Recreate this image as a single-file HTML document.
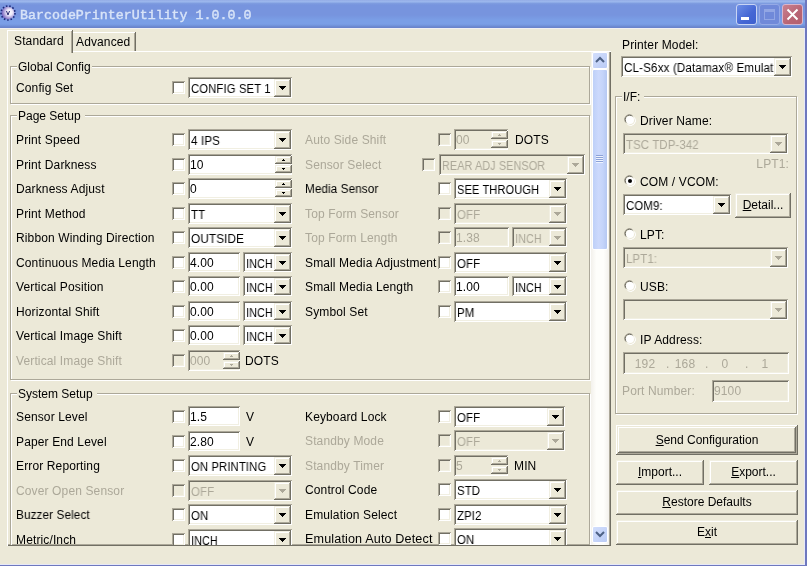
<!DOCTYPE html>
<html><head><meta charset="utf-8"><style>
html,body{margin:0;padding:0;}
body{width:807px;height:566px;overflow:hidden;background:#ECE9D8;position:relative;font-family:"Liberation Sans",sans-serif;font-size:12px;}
div,svg{position:absolute;box-sizing:border-box;}
.t{will-change:transform;white-space:nowrap;line-height:13px;color:#000;letter-spacing:0.13px;}
.d{color:#ACA899;}
.sk{box-shadow:inset 1px 1px #ACA899, inset -1px -1px #FFFFFF, inset 2px 2px #716F64, inset -2px -2px #F1EFE2;}
.rb,.sb{background:#ECE9D8;box-shadow:inset -1px -1px #716F64, inset 1px 1px #F1EFE2, inset -2px -2px #ACA899, inset 2px 2px #FFFFFF;}
.ck{width:13px;height:13px;box-shadow:inset 1px 1px #ACA899, inset -1px -1px #FFFFFF, inset 2px 2px #716F64, inset -2px -2px #F1EFE2;}
.gb{border:1px solid #ACA899;box-shadow:inset 1px 1px #fff, 1px 1px #fff;}
.gt{will-change:transform;background:#ECE9D8;height:13px;line-height:13px;white-space:nowrap;padding-left:1px;}
.btn{will-change:transform;background:#ECE9D8;text-align:center;white-space:nowrap;box-shadow:inset -1px -1px #716F64, inset 1px 1px #F1EFE2, inset -2px -2px #ACA899, inset 2px 2px #FFFFFF;}
.btn.def{box-shadow:inset -1px -1px #716F64, inset 1px 1px #FFFFFF, inset -2px -2px #ACA899, inset 2px 2px #ECE9D8, inset -3px -3px #716F64, inset 3px 3px #FFFFFF, inset -4px -4px #ACA899, inset 4px 4px #ECE9D8;}
#clip{left:8px;top:52px;width:583px;height:493px;overflow:hidden;}
#clip > *{}
#title{left:0;top:0;width:807px;height:28px;background:linear-gradient(to bottom,#94ACE6 0px,#9DB9EE 2px,#809EE0 3px,#7794DE 5px,#7794DE 15px,#7A9EE6 20px,#7A9EE6 24px,#7090D8 26px,#6A84CC 27px,#6A84CC 28px);}
</style></head><body>
<div id="title"></div>
<div class="t" style="left:20px;top:9px;font-family:'Liberation Mono',monospace;font-weight:normal;-webkit-text-stroke:0.4px #D8E4F8;font-size:13.3px;line-height:14px;color:#D8E4F8;letter-spacing:0;">BarcodePrinterUtility 1.0.0.0</div>

<!-- title icon -->
<svg style="left:0px;top:5px" width="17" height="17">
<defs><radialGradient id="ig" cx="0.62" cy="0.45" r="0.65"><stop offset="0" stop-color="#ffffff"/><stop offset="0.35" stop-color="#EDE8FA"/><stop offset="1" stop-color="#6450B4"/></radialGradient></defs>
<circle cx="8" cy="8" r="6.5" fill="url(#ig)"/>
<circle cx="8" cy="8" r="7" fill="none" stroke="#1E2A7A" stroke-width="1.6" stroke-dasharray="1.6 1.8"/>
<path d="M6.5,6 L8,10 L9.5,6" stroke="#2A2A70" stroke-width="1" fill="none"/>
</svg>
<!-- title buttons -->
<div style="left:736px;top:4px;width:21px;height:21px;border-radius:3px;border:1px solid #C8D4F4;background:linear-gradient(135deg,#6E8FE6,#4466D4 60%,#3D60CF);"></div>
<div style="left:741px;top:17px;width:8px;height:3px;background:#fff;"></div>
<div style="left:759px;top:4px;width:21px;height:21px;border-radius:3px;border:1px solid #95A9E6;background:#7089D9;"></div>
<div style="left:764px;top:9px;width:11px;height:11px;border:1px solid #92A6E4;border-top-width:3px;"></div>
<div style="left:782px;top:4px;width:21px;height:21px;border-radius:3px;border:1px solid #D9B5CB;background:linear-gradient(135deg,#C98190,#B86474 60%,#B35F6F);"></div>
<svg style="left:786px;top:8px" width="13" height="13"><path d="M1.5,1.5 L11.5,11.5 M11.5,1.5 L1.5,11.5" stroke="#fff" stroke-width="2"/></svg>
<div style="left:0;top:28px;width:804px;height:1px;background:#F2F0F0"></div>
<!-- tabs -->
<div style="left:7px;top:51px;width:604px;height:495px;box-shadow:inset 1px 1px #fff, inset -1px -1px #716F64, inset -2px -2px #ACA899;"></div>
<div style="left:72px;top:32px;width:63px;height:19px;background:#ECE9D8;border-left:1px solid #fff;border-top:1px solid #fff;box-shadow:inset -1px 0 #ACA899, 1px 0 #716F64;"></div>
<div class="t" style="left:76px;top:36px;">Advanced</div>
<div style="left:7px;top:30px;width:65px;height:23px;background:#ECE9D8;border-left:1px solid #fff;border-top:1px solid #fff;box-shadow:inset -1px 0 #ACA899, 1px 0 #716F64;"></div>
<div class="t" style="left:14px;top:35px;">Standard</div>
<div id="clip"><div style="left:-8px;top:-52px;width:807px;height:566px">
<div class="gb" style="left:10px;top:66px;width:580px;height:38px"></div>
<div class="gt" style="left:17px;top:61px;width:75px"><span>Global Config</span></div>
<div class="t" style="left:16px;top:82px;">Config Set</div>
<div class="ck" style="left:172px;top:81px;background:#fff"></div>
<div class="sk" style="left:188px;top:77px;width:104px;height:21px;background:#fff"></div>
<div class="rb" style="left:274px;top:79px;width:17px;height:18px"></div>
<svg style="left:279px;top:86px" width="7" height="4" shape-rendering="crispEdges"><path d="M0,0h7v1h-1v1h-1v1h-1v1h-1v-1h-1v-1h-1v-1h-1z" fill="#000"/></svg>
<div class="t" style="left:191px;top:83px;width:83px;overflow:hidden"><div class="t" style="position:relative;color:inherit;transform:scaleX(0.94);transform-origin:0 0">CONFIG SET 1</div></div>
<div class="gb" style="left:10px;top:115px;width:580px;height:265px"></div>
<div class="gt" style="left:17px;top:110px;width:68px"><span>Page Setup</span></div>
<div class="t" style="left:16px;top:134px;">Print Speed</div>
<div class="ck" style="left:172px;top:133px;background:#fff"></div>
<div class="sk" style="left:188px;top:129px;width:104px;height:21px;background:#fff"></div>
<div class="rb" style="left:274px;top:131px;width:17px;height:18px"></div>
<svg style="left:279px;top:138px" width="7" height="4" shape-rendering="crispEdges"><path d="M0,0h7v1h-1v1h-1v1h-1v1h-1v-1h-1v-1h-1v-1h-1z" fill="#000"/></svg>
<div class="t" style="left:191px;top:135px;width:83px;overflow:hidden"><div class="t" style="position:relative;color:inherit;transform:scaleX(0.97);transform-origin:0 0">4 IPS</div></div>
<div class="t" style="left:16px;top:159px;">Print Darkness</div>
<div class="ck" style="left:172px;top:158px;background:#fff"></div>
<div class="sk" style="left:188px;top:154px;width:104px;height:21px;background:#fff"></div>
<div class="sb" style="left:275px;top:156px;width:17px;height:8px"></div>
<div class="sb" style="left:275px;top:165px;width:17px;height:8px"></div>
<svg style="left:282px;top:159px" width="3" height="2" shape-rendering="crispEdges"><path d="M1,0h1v1h1v1h-3v-1h1z" fill="#000"/></svg>
<svg style="left:282px;top:168px" width="3" height="2" shape-rendering="crispEdges"><path d="M0,0h3v1h-1v1h-1v-1h-1z" fill="#000"/></svg>
<div class="t" style="left:190px;top:159px;">10</div>
<div class="t" style="left:16px;top:183px;">Darkness Adjust</div>
<div class="ck" style="left:172px;top:182px;background:#fff"></div>
<div class="sk" style="left:188px;top:178px;width:104px;height:21px;background:#fff"></div>
<div class="sb" style="left:275px;top:180px;width:17px;height:8px"></div>
<div class="sb" style="left:275px;top:189px;width:17px;height:8px"></div>
<svg style="left:282px;top:183px" width="3" height="2" shape-rendering="crispEdges"><path d="M1,0h1v1h1v1h-3v-1h1z" fill="#000"/></svg>
<svg style="left:282px;top:192px" width="3" height="2" shape-rendering="crispEdges"><path d="M0,0h3v1h-1v1h-1v-1h-1z" fill="#000"/></svg>
<div class="t" style="left:190px;top:183px;">0</div>
<div class="t" style="left:16px;top:208px;">Print Method</div>
<div class="ck" style="left:172px;top:207px;background:#fff"></div>
<div class="sk" style="left:188px;top:203px;width:104px;height:21px;background:#fff"></div>
<div class="rb" style="left:274px;top:205px;width:17px;height:18px"></div>
<svg style="left:279px;top:212px" width="7" height="4" shape-rendering="crispEdges"><path d="M0,0h7v1h-1v1h-1v1h-1v1h-1v-1h-1v-1h-1v-1h-1z" fill="#000"/></svg>
<div class="t" style="left:191px;top:209px;width:83px;overflow:hidden"><div class="t" style="position:relative;color:inherit;transform:scaleX(0.95);transform-origin:0 0">TT</div></div>
<div class="t" style="left:16px;top:232px;">Ribbon Winding Direction</div>
<div class="ck" style="left:172px;top:231px;background:#fff"></div>
<div class="sk" style="left:188px;top:227px;width:104px;height:21px;background:#fff"></div>
<div class="rb" style="left:274px;top:229px;width:17px;height:18px"></div>
<svg style="left:279px;top:236px" width="7" height="4" shape-rendering="crispEdges"><path d="M0,0h7v1h-1v1h-1v1h-1v1h-1v-1h-1v-1h-1v-1h-1z" fill="#000"/></svg>
<div class="t" style="left:191px;top:233px;width:83px;overflow:hidden"><div class="t" style="position:relative;color:inherit;transform:scaleX(0.98);transform-origin:0 0">OUTSIDE</div></div>
<div class="t" style="left:16px;top:257px;">Continuous Media Length</div>
<div class="ck" style="left:172px;top:256px;background:#fff"></div>
<div class="sk" style="left:188px;top:252px;width:52px;height:20px;background:#fff"></div>
<div class="t" style="left:190px;top:257px;">4.00</div>
<div class="sk" style="left:243px;top:252px;width:49px;height:20px;background:#fff"></div>
<div class="rb" style="left:274px;top:254px;width:17px;height:17px"></div>
<svg style="left:279px;top:261px" width="7" height="4" shape-rendering="crispEdges"><path d="M0,0h7v1h-1v1h-1v1h-1v1h-1v-1h-1v-1h-1v-1h-1z" fill="#000"/></svg>
<div class="t" style="left:246px;top:258px;width:28px;overflow:hidden"><div class="t" style="position:relative;color:inherit;transform:scaleX(0.9);transform-origin:0 0">INCH</div></div>
<div class="t" style="left:16px;top:281px;">Vertical Position</div>
<div class="ck" style="left:172px;top:280px;background:#fff"></div>
<div class="sk" style="left:188px;top:276px;width:52px;height:20px;background:#fff"></div>
<div class="t" style="left:190px;top:281px;">0.00</div>
<div class="sk" style="left:243px;top:276px;width:49px;height:20px;background:#fff"></div>
<div class="rb" style="left:274px;top:278px;width:17px;height:17px"></div>
<svg style="left:279px;top:285px" width="7" height="4" shape-rendering="crispEdges"><path d="M0,0h7v1h-1v1h-1v1h-1v1h-1v-1h-1v-1h-1v-1h-1z" fill="#000"/></svg>
<div class="t" style="left:246px;top:282px;width:28px;overflow:hidden"><div class="t" style="position:relative;color:inherit;transform:scaleX(0.9);transform-origin:0 0">INCH</div></div>
<div class="t" style="left:16px;top:306px;">Horizontal Shift</div>
<div class="ck" style="left:172px;top:305px;background:#fff"></div>
<div class="sk" style="left:188px;top:301px;width:52px;height:20px;background:#fff"></div>
<div class="t" style="left:190px;top:306px;">0.00</div>
<div class="sk" style="left:243px;top:301px;width:49px;height:20px;background:#fff"></div>
<div class="rb" style="left:274px;top:303px;width:17px;height:17px"></div>
<svg style="left:279px;top:310px" width="7" height="4" shape-rendering="crispEdges"><path d="M0,0h7v1h-1v1h-1v1h-1v1h-1v-1h-1v-1h-1v-1h-1z" fill="#000"/></svg>
<div class="t" style="left:246px;top:307px;width:28px;overflow:hidden"><div class="t" style="position:relative;color:inherit;transform:scaleX(0.9);transform-origin:0 0">INCH</div></div>
<div class="t" style="left:16px;top:330px;">Vertical Image Shift</div>
<div class="ck" style="left:172px;top:329px;background:#fff"></div>
<div class="sk" style="left:188px;top:325px;width:52px;height:20px;background:#fff"></div>
<div class="t" style="left:190px;top:330px;">0.00</div>
<div class="sk" style="left:243px;top:325px;width:49px;height:20px;background:#fff"></div>
<div class="rb" style="left:274px;top:327px;width:17px;height:17px"></div>
<svg style="left:279px;top:334px" width="7" height="4" shape-rendering="crispEdges"><path d="M0,0h7v1h-1v1h-1v1h-1v1h-1v-1h-1v-1h-1v-1h-1z" fill="#000"/></svg>
<div class="t" style="left:246px;top:331px;width:28px;overflow:hidden"><div class="t" style="position:relative;color:inherit;transform:scaleX(0.9);transform-origin:0 0">INCH</div></div>
<div class="t d" style="left:16px;top:355px;">Vertical Image Shift</div>
<div class="ck" style="left:172px;top:354px;background:#ECE9D8"></div>
<div class="sk" style="left:188px;top:350px;width:52px;height:21px;background:#ECE9D8"></div>
<div class="sb" style="left:223px;top:352px;width:17px;height:8px"></div>
<div class="sb" style="left:223px;top:361px;width:17px;height:8px"></div>
<svg style="left:230px;top:355px" width="3" height="2" shape-rendering="crispEdges"><path d="M1,0h1v1h1v1h-3v-1h1z" fill="#ACA899"/></svg>
<svg style="left:230px;top:364px" width="3" height="2" shape-rendering="crispEdges"><path d="M0,0h3v1h-1v1h-1v-1h-1z" fill="#ACA899"/></svg>
<div class="t d" style="left:190px;top:355px;">000</div>
<div class="t" style="left:245px;top:355px;">DOTS</div>
<div class="t d" style="left:305px;top:134px;">Auto Side Shift</div>
<div class="ck" style="left:438px;top:133px;background:#ECE9D8"></div>
<div class="sk" style="left:454px;top:129px;width:54px;height:21px;background:#ECE9D8"></div>
<div class="sb" style="left:491px;top:131px;width:17px;height:8px"></div>
<div class="sb" style="left:491px;top:140px;width:17px;height:8px"></div>
<svg style="left:498px;top:134px" width="3" height="2" shape-rendering="crispEdges"><path d="M1,0h1v1h1v1h-3v-1h1z" fill="#ACA899"/></svg>
<svg style="left:498px;top:143px" width="3" height="2" shape-rendering="crispEdges"><path d="M0,0h3v1h-1v1h-1v-1h-1z" fill="#ACA899"/></svg>
<div class="t d" style="left:456px;top:134px;">00</div>
<div class="t" style="left:515px;top:134px;">DOTS</div>
<div class="t d" style="left:305px;top:159px;">Sensor Select</div>
<div class="ck" style="left:422px;top:158px;background:#ECE9D8"></div>
<div class="sk" style="left:439px;top:154px;width:146px;height:21px;background:#ECE9D8"></div>
<div class="rb" style="left:567px;top:156px;width:17px;height:18px"></div>
<svg style="left:572px;top:163px" width="7" height="4" shape-rendering="crispEdges"><path d="M0,0h7v1h-1v1h-1v1h-1v1h-1v-1h-1v-1h-1v-1h-1z" fill="#ACA899"/></svg>
<div class="t d" style="left:442px;top:160px;width:125px;overflow:hidden"><div class="t" style="position:relative;color:inherit;transform:scaleX(0.9);transform-origin:0 0">REAR ADJ SENSOR</div></div>
<div class="t" style="left:305px;top:183px;transform:scaleX(0.97);transform-origin:0 0;">Media Sensor</div>
<div class="ck" style="left:438px;top:182px;background:#fff"></div>
<div class="sk" style="left:454px;top:178px;width:113px;height:21px;background:#fff"></div>
<div class="rb" style="left:549px;top:180px;width:17px;height:18px"></div>
<svg style="left:554px;top:187px" width="7" height="4" shape-rendering="crispEdges"><path d="M0,0h7v1h-1v1h-1v1h-1v1h-1v-1h-1v-1h-1v-1h-1z" fill="#000"/></svg>
<div class="t" style="left:457px;top:184px;width:92px;overflow:hidden"><div class="t" style="position:relative;color:inherit;transform:scaleX(0.92);transform-origin:0 0">SEE THROUGH</div></div>
<div class="t d" style="left:305px;top:208px;">Top Form Sensor</div>
<div class="ck" style="left:438px;top:207px;background:#ECE9D8"></div>
<div class="sk" style="left:454px;top:203px;width:113px;height:21px;background:#ECE9D8"></div>
<div class="rb" style="left:549px;top:205px;width:17px;height:18px"></div>
<svg style="left:554px;top:212px" width="7" height="4" shape-rendering="crispEdges"><path d="M0,0h7v1h-1v1h-1v1h-1v1h-1v-1h-1v-1h-1v-1h-1z" fill="#ACA899"/></svg>
<div class="t d" style="left:457px;top:209px;width:92px;overflow:hidden"><div class="t" style="position:relative;color:inherit;transform:scaleX(0.95);transform-origin:0 0">OFF</div></div>
<div class="t d" style="left:305px;top:232px;">Top Form Length</div>
<div class="ck" style="left:438px;top:231px;background:#ECE9D8"></div>
<div class="sk" style="left:454px;top:227px;width:55px;height:20px;background:#ECE9D8"></div>
<div class="t d" style="left:456px;top:232px;">1.38</div>
<div class="sk" style="left:512px;top:227px;width:55px;height:20px;background:#ECE9D8"></div>
<div class="rb" style="left:549px;top:229px;width:17px;height:17px"></div>
<svg style="left:554px;top:236px" width="7" height="4" shape-rendering="crispEdges"><path d="M0,0h7v1h-1v1h-1v1h-1v1h-1v-1h-1v-1h-1v-1h-1z" fill="#ACA899"/></svg>
<div class="t d" style="left:515px;top:233px;width:34px;overflow:hidden"><div class="t" style="position:relative;color:inherit;transform:scaleX(0.9);transform-origin:0 0">INCH</div></div>
<div class="t" style="left:305px;top:257px;">Small Media Adjustment</div>
<div class="ck" style="left:438px;top:256px;background:#fff"></div>
<div class="sk" style="left:454px;top:252px;width:113px;height:21px;background:#fff"></div>
<div class="rb" style="left:549px;top:254px;width:17px;height:18px"></div>
<svg style="left:554px;top:261px" width="7" height="4" shape-rendering="crispEdges"><path d="M0,0h7v1h-1v1h-1v1h-1v1h-1v-1h-1v-1h-1v-1h-1z" fill="#000"/></svg>
<div class="t" style="left:457px;top:258px;width:92px;overflow:hidden"><div class="t" style="position:relative;color:inherit;transform:scaleX(0.95);transform-origin:0 0">OFF</div></div>
<div class="t" style="left:305px;top:281px;">Small Media Length</div>
<div class="ck" style="left:438px;top:280px;background:#fff"></div>
<div class="sk" style="left:454px;top:276px;width:55px;height:20px;background:#fff"></div>
<div class="t" style="left:456px;top:281px;">1.00</div>
<div class="sk" style="left:512px;top:276px;width:55px;height:20px;background:#fff"></div>
<div class="rb" style="left:549px;top:278px;width:17px;height:17px"></div>
<svg style="left:554px;top:285px" width="7" height="4" shape-rendering="crispEdges"><path d="M0,0h7v1h-1v1h-1v1h-1v1h-1v-1h-1v-1h-1v-1h-1z" fill="#000"/></svg>
<div class="t" style="left:515px;top:282px;width:34px;overflow:hidden"><div class="t" style="position:relative;color:inherit;transform:scaleX(0.9);transform-origin:0 0">INCH</div></div>
<div class="t" style="left:305px;top:306px;">Symbol Set</div>
<div class="ck" style="left:438px;top:305px;background:#fff"></div>
<div class="sk" style="left:454px;top:301px;width:113px;height:21px;background:#fff"></div>
<div class="rb" style="left:549px;top:303px;width:17px;height:18px"></div>
<svg style="left:554px;top:310px" width="7" height="4" shape-rendering="crispEdges"><path d="M0,0h7v1h-1v1h-1v1h-1v1h-1v-1h-1v-1h-1v-1h-1z" fill="#000"/></svg>
<div class="t" style="left:457px;top:307px;width:92px;overflow:hidden"><div class="t" style="position:relative;color:inherit;transform:scaleX(0.95);transform-origin:0 0">PM</div></div>
<div class="gb" style="left:10px;top:393px;width:580px;height:200px"></div>
<div class="gt" style="left:17px;top:388px;width:80px"><span>System Setup</span></div>
<div class="t" style="left:16px;top:411px;">Sensor Level</div>
<div class="ck" style="left:172px;top:410px;background:#fff"></div>
<div class="sk" style="left:188px;top:406px;width:52px;height:20px;background:#fff"></div>
<div class="t" style="left:190px;top:411px;">1.5</div>
<div class="t" style="left:246px;top:411px;">V</div>
<div class="t" style="left:16px;top:436px;">Paper End Level</div>
<div class="ck" style="left:172px;top:435px;background:#fff"></div>
<div class="sk" style="left:188px;top:431px;width:52px;height:20px;background:#fff"></div>
<div class="t" style="left:190px;top:436px;">2.80</div>
<div class="t" style="left:246px;top:436px;">V</div>
<div class="t" style="left:16px;top:460px;">Error Reporting</div>
<div class="ck" style="left:172px;top:459px;background:#fff"></div>
<div class="sk" style="left:188px;top:455px;width:104px;height:21px;background:#fff"></div>
<div class="rb" style="left:274px;top:457px;width:17px;height:18px"></div>
<svg style="left:279px;top:464px" width="7" height="4" shape-rendering="crispEdges"><path d="M0,0h7v1h-1v1h-1v1h-1v1h-1v-1h-1v-1h-1v-1h-1z" fill="#000"/></svg>
<div class="t" style="left:191px;top:461px;width:83px;overflow:hidden"><div class="t" style="position:relative;color:inherit;transform:scaleX(0.94);transform-origin:0 0">ON PRINTING</div></div>
<div class="t d" style="left:16px;top:485px;">Cover Open Sensor</div>
<div class="ck" style="left:172px;top:484px;background:#ECE9D8"></div>
<div class="sk" style="left:188px;top:480px;width:104px;height:21px;background:#ECE9D8"></div>
<div class="rb" style="left:274px;top:482px;width:17px;height:18px"></div>
<svg style="left:279px;top:489px" width="7" height="4" shape-rendering="crispEdges"><path d="M0,0h7v1h-1v1h-1v1h-1v1h-1v-1h-1v-1h-1v-1h-1z" fill="#ACA899"/></svg>
<div class="t d" style="left:191px;top:486px;width:83px;overflow:hidden"><div class="t" style="position:relative;color:inherit;transform:scaleX(0.95);transform-origin:0 0">OFF</div></div>
<div class="t" style="left:16px;top:509px;transform:scaleX(0.975);transform-origin:0 0;">Buzzer Select</div>
<div class="ck" style="left:172px;top:508px;background:#fff"></div>
<div class="sk" style="left:188px;top:504px;width:104px;height:21px;background:#fff"></div>
<div class="rb" style="left:274px;top:506px;width:17px;height:18px"></div>
<svg style="left:279px;top:513px" width="7" height="4" shape-rendering="crispEdges"><path d="M0,0h7v1h-1v1h-1v1h-1v1h-1v-1h-1v-1h-1v-1h-1z" fill="#000"/></svg>
<div class="t" style="left:191px;top:510px;width:83px;overflow:hidden"><div class="t" style="position:relative;color:inherit;transform:scaleX(0.95);transform-origin:0 0">ON</div></div>
<div class="t" style="left:16px;top:534px;">Metric/Inch</div>
<div class="ck" style="left:172px;top:533px;background:#fff"></div>
<div class="sk" style="left:188px;top:529px;width:104px;height:21px;background:#fff"></div>
<div class="rb" style="left:274px;top:531px;width:17px;height:18px"></div>
<svg style="left:279px;top:538px" width="7" height="4" shape-rendering="crispEdges"><path d="M0,0h7v1h-1v1h-1v1h-1v1h-1v-1h-1v-1h-1v-1h-1z" fill="#000"/></svg>
<div class="t" style="left:191px;top:535px;width:83px;overflow:hidden"><div class="t" style="position:relative;color:inherit;transform:scaleX(0.9);transform-origin:0 0">INCH</div></div>
<div class="t" style="left:305px;top:411px;">Keyboard Lock</div>
<div class="ck" style="left:438px;top:410px;background:#fff"></div>
<div class="sk" style="left:454px;top:406px;width:111px;height:21px;background:#fff"></div>
<div class="rb" style="left:547px;top:408px;width:17px;height:18px"></div>
<svg style="left:552px;top:415px" width="7" height="4" shape-rendering="crispEdges"><path d="M0,0h7v1h-1v1h-1v1h-1v1h-1v-1h-1v-1h-1v-1h-1z" fill="#000"/></svg>
<div class="t" style="left:457px;top:412px;width:90px;overflow:hidden"><div class="t" style="position:relative;color:inherit;transform:scaleX(0.95);transform-origin:0 0">OFF</div></div>
<div class="t d" style="left:305px;top:435px;">Standby Mode</div>
<div class="ck" style="left:438px;top:434px;background:#ECE9D8"></div>
<div class="sk" style="left:454px;top:430px;width:111px;height:21px;background:#ECE9D8"></div>
<div class="rb" style="left:547px;top:432px;width:17px;height:18px"></div>
<svg style="left:552px;top:439px" width="7" height="4" shape-rendering="crispEdges"><path d="M0,0h7v1h-1v1h-1v1h-1v1h-1v-1h-1v-1h-1v-1h-1z" fill="#ACA899"/></svg>
<div class="t d" style="left:457px;top:436px;width:90px;overflow:hidden"><div class="t" style="position:relative;color:inherit;transform:scaleX(0.95);transform-origin:0 0">OFF</div></div>
<div class="t d" style="left:305px;top:460px;">Standby Timer</div>
<div class="ck" style="left:438px;top:459px;background:#ECE9D8"></div>
<div class="sk" style="left:454px;top:455px;width:54px;height:21px;background:#ECE9D8"></div>
<div class="sb" style="left:491px;top:457px;width:17px;height:8px"></div>
<div class="sb" style="left:491px;top:466px;width:17px;height:8px"></div>
<svg style="left:498px;top:460px" width="3" height="2" shape-rendering="crispEdges"><path d="M1,0h1v1h1v1h-3v-1h1z" fill="#ACA899"/></svg>
<svg style="left:498px;top:469px" width="3" height="2" shape-rendering="crispEdges"><path d="M0,0h3v1h-1v1h-1v-1h-1z" fill="#ACA899"/></svg>
<div class="t d" style="left:456px;top:460px;">5</div>
<div class="t" style="left:514px;top:460px;">MIN</div>
<div class="t" style="left:305px;top:484px;">Control Code</div>
<div class="ck" style="left:438px;top:483px;background:#fff"></div>
<div class="sk" style="left:454px;top:479px;width:113px;height:21px;background:#fff"></div>
<div class="rb" style="left:549px;top:481px;width:17px;height:18px"></div>
<svg style="left:554px;top:488px" width="7" height="4" shape-rendering="crispEdges"><path d="M0,0h7v1h-1v1h-1v1h-1v1h-1v-1h-1v-1h-1v-1h-1z" fill="#000"/></svg>
<div class="t" style="left:457px;top:485px;width:92px;overflow:hidden"><div class="t" style="position:relative;color:inherit;transform:scaleX(0.95);transform-origin:0 0">STD</div></div>
<div class="t" style="left:305px;top:509px;">Emulation Select</div>
<div class="ck" style="left:438px;top:508px;background:#fff"></div>
<div class="sk" style="left:454px;top:504px;width:113px;height:21px;background:#fff"></div>
<div class="rb" style="left:549px;top:506px;width:17px;height:18px"></div>
<svg style="left:554px;top:513px" width="7" height="4" shape-rendering="crispEdges"><path d="M0,0h7v1h-1v1h-1v1h-1v1h-1v-1h-1v-1h-1v-1h-1z" fill="#000"/></svg>
<div class="t" style="left:457px;top:510px;width:92px;overflow:hidden"><div class="t" style="position:relative;color:inherit;transform:scaleX(0.95);transform-origin:0 0">ZPI2</div></div>
<div class="t" style="left:305px;top:533px;transform:scaleX(1.05);transform-origin:0 0;">Emulation Auto Detect</div>
<div class="ck" style="left:438px;top:532px;background:#fff"></div>
<div class="sk" style="left:454px;top:528px;width:113px;height:21px;background:#fff"></div>
<div class="rb" style="left:549px;top:530px;width:17px;height:18px"></div>
<svg style="left:554px;top:537px" width="7" height="4" shape-rendering="crispEdges"><path d="M0,0h7v1h-1v1h-1v1h-1v1h-1v-1h-1v-1h-1v-1h-1z" fill="#000"/></svg>
<div class="t" style="left:457px;top:534px;width:92px;overflow:hidden"><div class="t" style="position:relative;color:inherit;transform:scaleX(0.95);transform-origin:0 0">ON</div></div>
</div></div>
<!-- scrollbar -->
<div style="left:591px;top:52px;width:18px;height:493px;background:linear-gradient(to right,#F3F1EC,#FEFEFB 30%,#FEFEFB 70%,#F3F1EC);"></div>
<div style="left:592px;top:52px;width:16px;height:17px;border-radius:2px;border:1px solid #fff;background:linear-gradient(135deg,#D2DEFC,#BACBF5);"></div>
<svg style="left:595px;top:56px" width="10" height="8"><path d="M1,6 L5,2 L9,6" stroke="#4D6185" stroke-width="2" fill="none"/></svg>
<div style="left:592px;top:69px;width:16px;height:181px;border-radius:2px;border:1px solid #fff;background:linear-gradient(to right,#BED0F8,#CCD9FC 40%,#C4D4FA 70%,#B6C8F2);"></div>
<div style="left:596px;top:155px;width:7px;height:8px;background:repeating-linear-gradient(to bottom,#8CA2D8 0px,#8CA2D8 1px,#EEF3FE 1px,#EEF3FE 2px);"></div>
<div style="left:592px;top:526px;width:16px;height:17px;border-radius:2px;border:1px solid #fff;background:linear-gradient(135deg,#D2DEFC,#BACBF5);"></div>
<svg style="left:595px;top:530px" width="10" height="8"><path d="M1,2 L5,6 L9,2" stroke="#4D6185" stroke-width="2" fill="none"/></svg>
<div class="t" style="left:622px;top:39px;">Printer Model:</div>
<div class="sk" style="left:621px;top:56px;width:171px;height:21px;background:#fff"></div>
<div class="rb" style="left:774px;top:58px;width:17px;height:18px"></div>
<svg style="left:779px;top:65px" width="7" height="4" shape-rendering="crispEdges"><path d="M0,0h7v1h-1v1h-1v1h-1v1h-1v-1h-1v-1h-1v-1h-1z" fill="#000"/></svg>
<div class="t" style="left:624px;top:62px;width:150px;overflow:hidden"><div class="t" style="position:relative;color:inherit;transform:scaleX(0.97);transform-origin:0 0">CL-S6xx (Datamax&reg; Emulat</div></div>
<div class="gb" style="left:615px;top:96px;width:182px;height:318px"></div>
<div class="gt" style="left:622px;top:91px;width:22px"><span>I/F:</span></div>
<svg style="position:absolute;left:624px;top:114px" width="12" height="12">
<path d="M1.5,8.5 A5,5 0 0 1 8.5,1.5" stroke="#ACA899" stroke-width="1" fill="none"/>
<path d="M2.5,8.5 A4,4 0 0 1 8.5,2.5" stroke="#716F64" stroke-width="1" fill="none"/>
<circle cx="6" cy="6" r="4" fill="#fff"/>
<path d="M10.5,3.5 A5,5 0 0 1 3.5,10.5" stroke="#fff" stroke-width="1" fill="none"/>
</svg>
<div class="t" style="left:640px;top:115px;">Driver Name:</div>
<div class="sk" style="left:623px;top:133px;width:165px;height:21px;background:#ECE9D8"></div>
<div class="rb" style="left:770px;top:135px;width:17px;height:18px"></div>
<svg style="left:775px;top:142px" width="7" height="4" shape-rendering="crispEdges"><path d="M0,0h7v1h-1v1h-1v1h-1v1h-1v-1h-1v-1h-1v-1h-1z" fill="#ACA899"/></svg>
<div class="t d" style="left:626px;top:139px;width:144px;overflow:hidden"><div class="t" style="position:relative;color:inherit;transform:scaleX(0.95);transform-origin:0 0">TSC TDP-342</div></div>
<div class="t d" style="left:789px;top:158px;transform:translateX(-100%)">LPT1:</div>
<svg style="position:absolute;left:624px;top:175px" width="12" height="12">
<path d="M1.5,8.5 A5,5 0 0 1 8.5,1.5" stroke="#ACA899" stroke-width="1" fill="none"/>
<path d="M2.5,8.5 A4,4 0 0 1 8.5,2.5" stroke="#716F64" stroke-width="1" fill="none"/>
<circle cx="6" cy="6" r="4" fill="#fff"/>
<path d="M10.5,3.5 A5,5 0 0 1 3.5,10.5" stroke="#fff" stroke-width="1" fill="none"/>
<circle cx="6" cy="6" r="2" fill="#000"/></svg>
<div class="t" style="left:640px;top:176px;">COM / VCOM:</div>
<div class="sk" style="left:623px;top:194px;width:108px;height:21px;background:#fff"></div>
<div class="rb" style="left:713px;top:196px;width:17px;height:18px"></div>
<svg style="left:718px;top:203px" width="7" height="4" shape-rendering="crispEdges"><path d="M0,0h7v1h-1v1h-1v1h-1v1h-1v-1h-1v-1h-1v-1h-1z" fill="#000"/></svg>
<div class="t" style="left:626px;top:200px;width:87px;overflow:hidden"><div class="t" style="position:relative;color:inherit;transform:scaleX(0.95);transform-origin:0 0">COM9:</div></div>
<div class="btn" style="left:735px;top:193px;width:56px;height:25px;line-height:25px"><u>D</u>etail...</div>
<svg style="position:absolute;left:624px;top:228px" width="12" height="12">
<path d="M1.5,8.5 A5,5 0 0 1 8.5,1.5" stroke="#ACA899" stroke-width="1" fill="none"/>
<path d="M2.5,8.5 A4,4 0 0 1 8.5,2.5" stroke="#716F64" stroke-width="1" fill="none"/>
<circle cx="6" cy="6" r="4" fill="#fff"/>
<path d="M10.5,3.5 A5,5 0 0 1 3.5,10.5" stroke="#fff" stroke-width="1" fill="none"/>
</svg>
<div class="t" style="left:640px;top:229px;">LPT:</div>
<div class="sk" style="left:623px;top:247px;width:165px;height:21px;background:#ECE9D8"></div>
<div class="rb" style="left:770px;top:249px;width:17px;height:18px"></div>
<svg style="left:775px;top:256px" width="7" height="4" shape-rendering="crispEdges"><path d="M0,0h7v1h-1v1h-1v1h-1v1h-1v-1h-1v-1h-1v-1h-1z" fill="#ACA899"/></svg>
<div class="t d" style="left:626px;top:253px;width:144px;overflow:hidden"><div class="t" style="position:relative;color:inherit;transform:scaleX(0.95);transform-origin:0 0">LPT1:</div></div>
<svg style="position:absolute;left:624px;top:280px" width="12" height="12">
<path d="M1.5,8.5 A5,5 0 0 1 8.5,1.5" stroke="#ACA899" stroke-width="1" fill="none"/>
<path d="M2.5,8.5 A4,4 0 0 1 8.5,2.5" stroke="#716F64" stroke-width="1" fill="none"/>
<circle cx="6" cy="6" r="4" fill="#fff"/>
<path d="M10.5,3.5 A5,5 0 0 1 3.5,10.5" stroke="#fff" stroke-width="1" fill="none"/>
</svg>
<div class="t" style="left:640px;top:281px;">USB:</div>
<div class="sk" style="left:623px;top:299px;width:165px;height:21px;background:#ECE9D8"></div>
<div class="rb" style="left:770px;top:301px;width:17px;height:18px"></div>
<svg style="left:775px;top:308px" width="7" height="4" shape-rendering="crispEdges"><path d="M0,0h7v1h-1v1h-1v1h-1v1h-1v-1h-1v-1h-1v-1h-1z" fill="#ACA899"/></svg>
<svg style="position:absolute;left:624px;top:333px" width="12" height="12">
<path d="M1.5,8.5 A5,5 0 0 1 8.5,1.5" stroke="#ACA899" stroke-width="1" fill="none"/>
<path d="M2.5,8.5 A4,4 0 0 1 8.5,2.5" stroke="#716F64" stroke-width="1" fill="none"/>
<circle cx="6" cy="6" r="4" fill="#fff"/>
<path d="M10.5,3.5 A5,5 0 0 1 3.5,10.5" stroke="#fff" stroke-width="1" fill="none"/>
</svg>
<div class="t" style="left:640px;top:334px;">IP Address:</div>
<div class="sk" style="left:623px;top:352px;width:166px;height:22px;background:#ECE9D8"></div>
<div class="t d" style="left:645px;top:358px;transform:translateX(-50%)">192</div>
<div class="t d" style="left:685px;top:358px;transform:translateX(-50%)">168</div>
<div class="t d" style="left:725px;top:358px;transform:translateX(-50%)">0</div>
<div class="t d" style="left:765px;top:358px;transform:translateX(-50%)">1</div>
<div class="t d" style="left:666px;top:358px;">.</div>
<div class="t d" style="left:705px;top:358px;">.</div>
<div class="t d" style="left:745px;top:358px;">.</div>
<div class="t d" style="left:622px;top:385px;">Port Number:</div>
<div class="sk" style="left:712px;top:380px;width:77px;height:22px;background:#ECE9D8"></div>
<div class="t d" style="left:714px;top:385px;">9100</div>
<div class="btn def" style="left:616px;top:425px;width:182px;height:30px;line-height:30px"><u>S</u>end Configuration</div>
<div class="btn" style="left:616px;top:460px;width:88px;height:25px;line-height:25px"><u>I</u>mport...</div>
<div class="btn" style="left:709px;top:460px;width:89px;height:25px;line-height:25px"><u>E</u>xport...</div>
<div class="btn" style="left:616px;top:490px;width:182px;height:25px;line-height:25px"><u>R</u>estore Defaults</div>
<div class="btn" style="left:616px;top:520px;width:182px;height:25px;line-height:25px">E<u>x</u>it</div>
<div style="left:804px;top:28px;width:1px;height:538px;background:#E6E8F8"></div>
<div style="left:805px;top:0;width:2px;height:566px;background:#6E78BE"></div>
<div style="left:0;top:564px;width:805px;height:1px;background:#E6E8F8"></div>
<div style="left:0;top:565px;width:807px;height:1px;background:#6E78BE"></div>
</body></html>
